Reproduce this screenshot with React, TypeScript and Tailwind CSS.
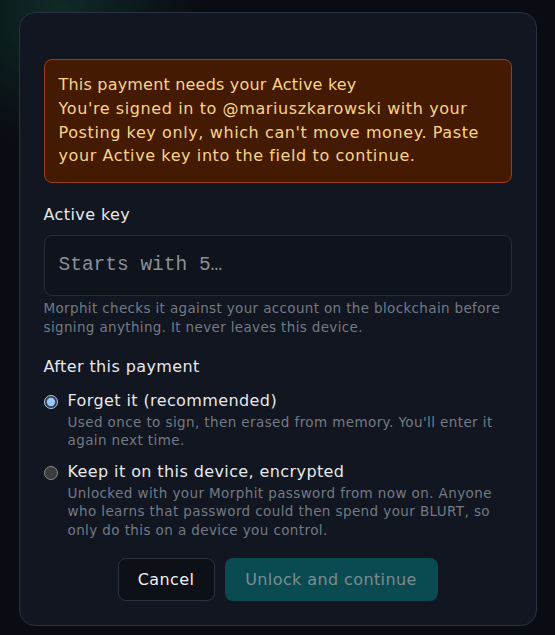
import { useState } from 'react';

function App() {
  const [keep, setKeep] = useState<'forget' | 'keep'>('forget');
  const [key, setKey] = useState('');

  return (
    <div className="min-h-screen bg-[#090c12] bg-[radial-gradient(circle_at_60px_10px,#0f2a26_0,transparent_140px)] pt-3 font-['DejaVu_Sans',sans-serif]">
      <div className="mx-auto w-[518px] rounded-2xl border border-[#2a3242] bg-[#111620] px-6 pt-[46px] pb-6">
        {/* Warning */}
        <div className="rounded-lg border border-[#9a3f10] bg-[#451a03] px-[14px] pt-[13px] pb-[14px] text-[#f8d48a] tracking-[0.6px]">
          <p className="text-[16px] leading-6 tracking-[0.2px]">This payment needs your Active key</p>
          <p className="text-[16px] leading-[23.5px]">
            You're signed in to @mariuszkarowski with your Posting key only, which can't move money. Paste
            your Active key into the field to continue.
          </p>
        </div>

        {/* Key input */}
        <label className="mt-5 block text-[16px] leading-6 tracking-[0.4px] text-[#e6e8ec]">Active key</label>
        <input
          value={key}
          onChange={e => setKey(e.target.value)}
          placeholder="Starts with 5…"
          className="mt-2 block h-[61px] w-full rounded-lg border border-[#272e3b] bg-[#0f131b] px-[14px] font-['Liberation_Mono',monospace] text-[19.5px] text-gray-300 outline-none placeholder:text-[#8a8f98]"
        />
        <p className="mt-[3px] text-[13.5px] leading-[19px] tracking-[0.35px] text-[#737a85]">
          Morphit checks it against your account on the blockchain before signing anything. It never leaves
          this device.
        </p>

        <h3 className="mt-[18px] text-[16px] leading-6 tracking-[0.4px] text-[#e6e8ec]">After this payment</h3>

        <div className="mt-[10px] flex flex-col gap-[10px]">
          <label className="flex gap-[10px] cursor-pointer">
            <input
              type="radio"
              name="after"
              checked={keep === 'forget'}
              onChange={() => setKeep('forget')}
              className="mt-[6px] h-[14px] w-[14px] shrink-0 [color-scheme:dark]"
            />
            <span>
              <span className="block text-[16px] leading-6 tracking-[0.4px] text-[#e6e8ec]">Forget it (recommended)</span>
              <span className="block text-[13.5px] leading-[18.5px] tracking-[0.4px] text-[#737a85]">
                Used once to sign, then erased from memory. You'll enter it again next time.
              </span>
            </span>
          </label>
          <label className="flex gap-[10px] cursor-pointer">
            <input
              type="radio"
              name="after"
              checked={keep === 'keep'}
              onChange={() => setKeep('keep')}
              className="mt-[6px] h-[14px] w-[14px] shrink-0 [color-scheme:dark]"
            />
            <span>
              <span className="block text-[16px] leading-6 tracking-[0.4px] text-[#e6e8ec]">Keep it on this device, encrypted</span>
              <span className="block text-[13.5px] leading-[18.5px] tracking-[0.4px] text-[#737a85]">
                Unlocked with your Morphit password from now on. Anyone who learns that password could then
                spend your BLURT, so only do this on a device you control.
              </span>
            </span>
          </label>
        </div>

        {/* Actions */}
        <div className="mt-[19px] flex justify-center gap-[10px]">
          <button className="h-[43px] w-[97px] rounded-lg border border-[#2c323e] bg-[#0d1117] text-[16px] tracking-[0.4px] text-[#eef0f3]">
            Cancel
          </button>
          <button
            disabled
            className="h-[43px] w-[213px] rounded-lg bg-[#0a4a51] text-[16px] tracking-[0.4px] text-[#7c8d90]"
          >
            Unlock and continue
          </button>
        </div>
      </div>
    </div>
  );
}

export default App;
